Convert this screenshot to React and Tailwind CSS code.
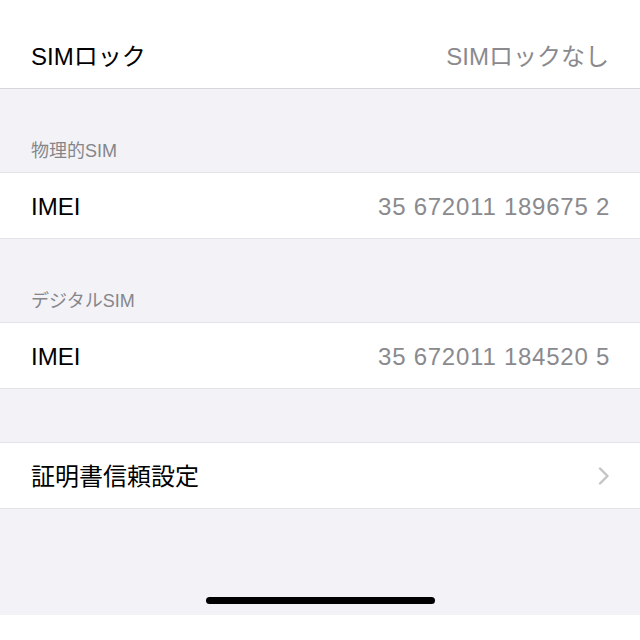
const font = { fontFamily: '"Liberation Sans", "Noto Sans CJK JP", sans-serif' };

function Row({ label, value, chevron, extra = "" }) {
  return (
    <div className={"flex items-center justify-between bg-white pl-[31px] pr-[31px] pt-[3px] border-y border-[#e3e3e8] " + extra}>
      <span className="text-[24px] text-black leading-none">{label}</span>
      {value && <span className="text-[24px] text-[#8a8a8e] leading-none tracking-[0.75px] mr-[-1px]">{value}</span>}
      {chevron && (
        <svg width="12" height="18" viewBox="0 0 12 18" className="mr-[-1px] mt-[-3px]">
          <path d="M2 1.5 L9.5 9 L2 16.5" fill="none" stroke="#c4c4c7" strokeWidth="2.4" strokeLinecap="round" strokeLinejoin="round" />
        </svg>
      )}
    </div>
  );
}

function Header({ children, extra = "" }) {
  return (
    <div className={"flex items-end pl-[31px] " + extra}>
      <span className="text-[18px] text-[#86868a] leading-none">{children}</span>
    </div>
  );
}

export default function App() {
  return (
    <div className="w-[640px] h-[640px] bg-[#f2f2f7] flex flex-col overflow-hidden" style={font}>
      {/* Top row, partly scrolled */}
      <div className="flex items-center justify-between bg-white h-[89px] pt-[25px] pl-[31px] pr-[31px] border-b border-[#d6d6da]">
        <span className="text-[24px] text-black leading-none">SIMロック</span>
        <span className="text-[24px] text-[#8a8a8e] leading-none">SIMロックなし</span>
      </div>

      <Header extra="h-[83px] pb-[12px]">物理的SIM</Header>
      <Row label="IMEI" value="35 672011 189675 2" extra="h-[67px]" />

      <Header extra="h-[83px] pb-[12px]">デジタルSIM</Header>
      <Row label="IMEI" value="35 672011 184520 5" extra="h-[67px]" />

      <div className="h-[53px]" />
      <Row label="証明書信頼設定" chevron extra="h-[67px]" />

      {/* Home indicator */}
      <div className="h-[106px] flex flex-col items-center justify-end pb-[11px]">
        <div className="w-[229px] h-[7px] rounded-full bg-black" />
      </div>
      <div className="flex-1 bg-white" />
    </div>
  );
}
